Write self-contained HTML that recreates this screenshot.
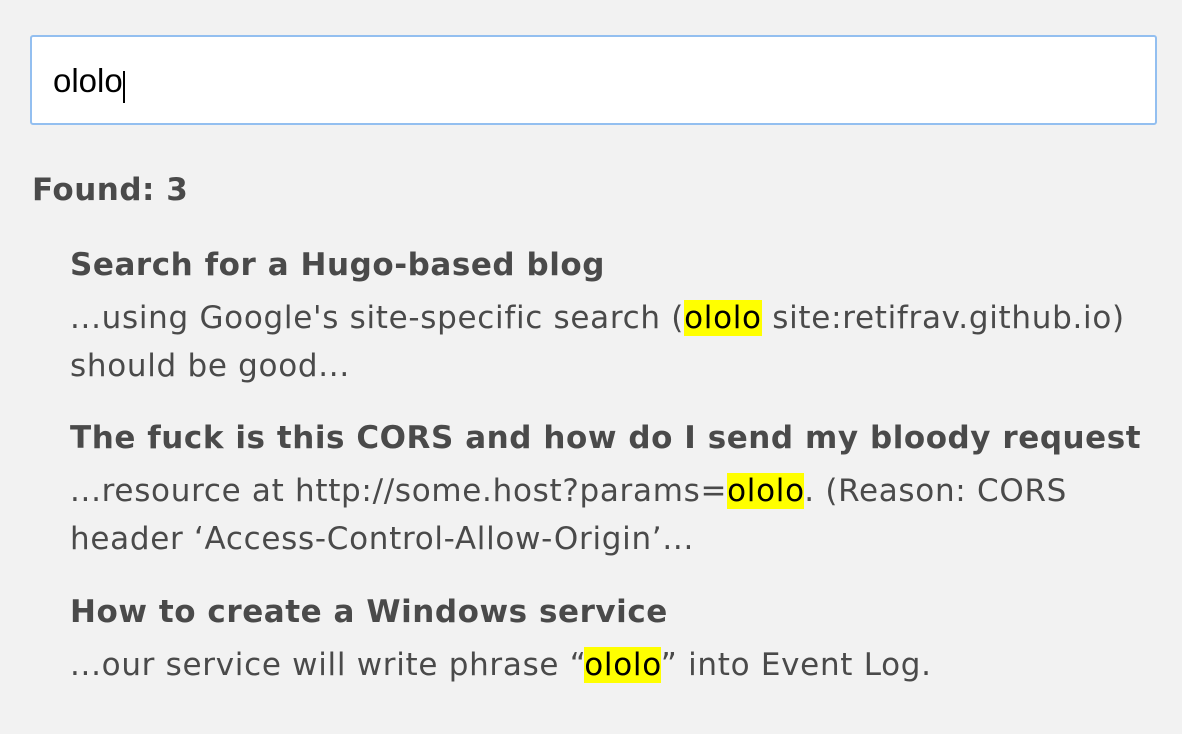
<!DOCTYPE html>
<html><head><style>
html,body{margin:0;padding:0;background:#f2f2f2;width:1182px;height:734px;overflow:hidden}
body{font-family:"DejaVu Sans",Verdana,sans-serif;color:#4a4a4a;position:relative}
.inp{position:absolute;left:30px;top:35px;width:1123px;height:86px;background:#fff;border:2px solid #93bff0;border-radius:3px}
.inp span{position:absolute;left:21px;top:26px;font-family:"Liberation Sans",Arial,sans-serif;font-size:33px;color:#000;line-height:36px}
.caret{position:absolute;left:91px;top:34px;width:2px;height:32px;background:#000}
.found{position:absolute;left:32px;top:172px;font-weight:bold;font-size:31px;line-height:36px;letter-spacing:0.5px}
.res{position:absolute;left:70px;width:1110px;font-size:31px;line-height:48px;letter-spacing:0.55px;white-space:nowrap}
.res b{display:block;line-height:36px}
.res div{margin-top:11px;letter-spacing:0.7px}
mark{background:#ffff00;color:#000}
</style></head><body>
<div class="inp"><span>ololo</span><div class="caret"></div></div>
<div class="found">Found: 3</div>
<div class="res" style="top:247px"><b>Search for a Hugo-based blog</b>
<div>...using Google's site-specific search (<mark>ololo</mark> site:retifrav.github.io)<br>should be good...</div></div>
<div class="res" style="top:420px"><b>The fuck is this CORS and how do I send my bloody request</b>
<div>...resource at http://some.host?params=<mark>ololo</mark>. (Reason: CORS<br>header ‘Access-Control-Allow-Origin’...</div></div>
<div class="res" style="top:594px"><b>How to create a Windows service</b>
<div>...our service will write phrase “<mark>ololo</mark>” into Event Log.</div></div>
</body></html>
